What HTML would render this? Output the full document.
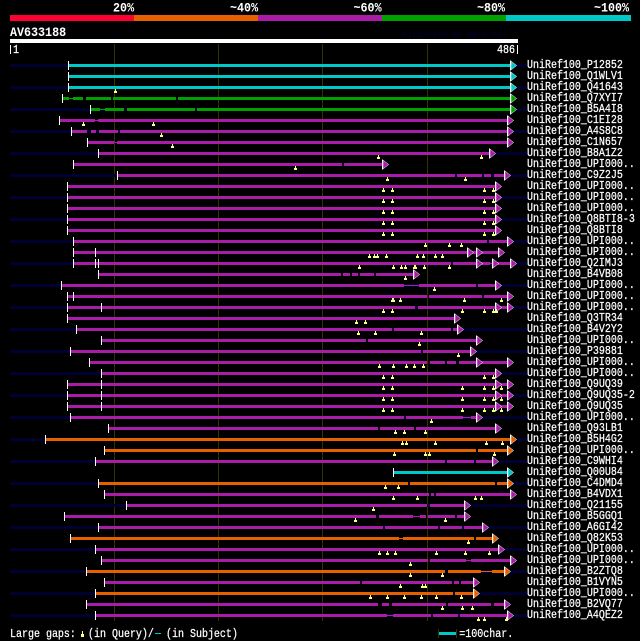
<!DOCTYPE html>
<html><head><meta charset="utf-8"><title>AV633188</title>
<style>
html,body{margin:0;background:#000}
svg{display:block}
.p{color:#a81ca8}.o{color:#e66000}.g{color:#00a000}.c{color:#00c8c8}
.b{fill:none;stroke:currentColor;stroke-width:3}
.n{fill:none;stroke:currentColor;stroke-width:1}
text{font-family:"Liberation Mono",monospace;fill:#fff}
.l text{font-size:12px;stroke:#fff;stroke-width:.25}
.h text{font-size:13px;font-weight:bold}
</style></head><body>
<svg width="640" height="641" viewBox="0 0 640 641" xmlns="http://www.w3.org/2000/svg">
<defs>
<g id="t"><rect x="0" y="-3" width="1" height="9" fill="#fff"/></g>
<g id="a"><path d="M1 -3L6.6 1.5L1 6Z" fill="currentColor" stroke="#fff" stroke-width=".5"/><rect x="0" y="-3.5" width="1" height="10" fill="#fff"/></g>
<path id="m" d="M0 3h1v2h1v2h-3v-2h1z" fill="#ffff80"/>
</defs>
<rect x="10" y="15" width="124" height="6" fill="#ff0033"/>
<rect x="134" y="15" width="124" height="6" fill="#e66000"/>
<rect x="258" y="15" width="124" height="6" fill="#a81ca8"/>
<rect x="382" y="15" width="124" height="6" fill="#00a000"/>
<rect x="506" y="15" width="125" height="6" fill="#00c8c8"/>
<rect x="10" y="39" width="508" height="4" fill="#fff"/>
<rect x="10" y="45" width="1" height="9" fill="#fff"/>
<rect x="517" y="45" width="1" height="9" fill="#fff"/>
<path d="M114.5 44V621M218.5 44V621M322.5 44V621M427.5 44V621" stroke="#333300" stroke-width="1" fill="none"/>
<path d="M10 65.5H527M10 87.5H527M10 109.5H527M10 131.5H527M10 153.5H527M10 175.5H527M10 197.5H527M10 219.5H527M10 241.5H527M10 263.5H527M10 285.5H527M10 307.5H527M10 329.5H527M10 351.5H527M10 373.5H527M10 395.5H527M10 417.5H527M10 439.5H527M10 461.5H527M10 483.5H527M10 505.5H527M10 527.5H527M10 549.5H527M10 571.5H527M10 593.5H527M10 615.5H527" stroke="#000033" stroke-width="3" fill="none"/>

<g class="c" transform="translate(0,64)"><path class="b" d="M68 1.5H510"/><use href="#t" x="68"/><use href="#a" x="510"/></g>
<g class="c" transform="translate(0,75)"><path class="b" d="M68 1.5H510"/><use href="#t" x="68"/><use href="#a" x="510"/></g>
<g class="c" transform="translate(0,86)"><path class="b" d="M68 1.5H510"/><use href="#t" x="68"/><use href="#a" x="510"/><use href="#m" x="115"/></g>
<g class="g" transform="translate(0,97)"><path class="b" d="M62 1.5H69M73 1.5H83M86 1.5H111M113 1.5H176M178 1.5H510"/><path class="n" d="M69 1.5H73"/><use href="#t" x="62"/><use href="#a" x="510"/></g>
<g class="g" transform="translate(0,108)"><path class="b" d="M90 1.5H100M105 1.5H124M127 1.5H195M197 1.5H510"/><path class="n" d="M100 1.5H105"/><use href="#t" x="90"/><use href="#a" x="510"/></g>
<g class="p" transform="translate(0,119)"><path class="b" d="M59 1.5H95M98 1.5H507"/><path class="n" d="M95 1.5H98"/><use href="#t" x="59"/><use href="#a" x="507"/><use href="#m" x="83"/><use href="#m" x="153"/></g>
<g class="p" transform="translate(0,130)"><path class="b" d="M71 1.5H87M91 1.5H96M99 1.5H118M120 1.5H507"/><use href="#t" x="71"/><use href="#a" x="507"/><use href="#m" x="161"/></g>
<g class="p" transform="translate(0,141)"><path class="b" d="M87 1.5H114M117 1.5H507"/><path class="n" d="M114 1.5H117"/><use href="#t" x="87"/><use href="#a" x="507"/><use href="#m" x="172"/></g>
<g class="p" transform="translate(0,152)"><path class="b" d="M98 1.5H489"/><use href="#t" x="98"/><use href="#a" x="489"/><use href="#m" x="378"/><use href="#m" x="481"/></g>
<g class="p" transform="translate(0,163)"><path class="b" d="M73 1.5H342M344 1.5H382"/><use href="#t" x="73"/><use href="#a" x="382"/><use href="#m" x="295"/></g>
<g class="p" transform="translate(0,174)"><path class="b" d="M117 1.5H455M457 1.5H482M484 1.5H491M494 1.5H504"/><use href="#t" x="117"/><use href="#a" x="504"/><use href="#m" x="387"/><use href="#m" x="465"/></g>
<g class="p" transform="translate(0,185)"><path class="b" d="M67 1.5H495"/><use href="#t" x="67"/><use href="#a" x="495"/><use href="#m" x="383"/><use href="#m" x="392"/><use href="#m" x="484"/><use href="#m" x="493"/></g>
<g class="p" transform="translate(0,196)"><path class="b" d="M67 1.5H495"/><use href="#t" x="67"/><use href="#a" x="495"/><use href="#m" x="383"/><use href="#m" x="392"/><use href="#m" x="484"/><use href="#m" x="493"/></g>
<g class="p" transform="translate(0,207)"><path class="b" d="M67 1.5H495"/><use href="#t" x="67"/><use href="#a" x="495"/><use href="#m" x="383"/><use href="#m" x="392"/><use href="#m" x="484"/><use href="#m" x="493"/></g>
<g class="p" transform="translate(0,218)"><path class="b" d="M67 1.5H495"/><use href="#t" x="67"/><use href="#a" x="495"/><use href="#m" x="383"/><use href="#m" x="392"/><use href="#m" x="484"/><use href="#m" x="493"/></g>
<g class="p" transform="translate(0,229)"><path class="b" d="M67 1.5H495"/><use href="#t" x="67"/><use href="#a" x="495"/><use href="#m" x="383"/><use href="#m" x="392"/><use href="#m" x="484"/><use href="#m" x="493"/></g>
<g class="p" transform="translate(0,240)"><path class="b" d="M73 1.5H487M489 1.5H507"/><use href="#t" x="73"/><use href="#a" x="507"/><use href="#m" x="425"/><use href="#m" x="449"/><use href="#m" x="461"/></g>
<g class="p" transform="translate(0,251)"><path class="b" d="M73 1.5H478M481 1.5H498"/><path class="n" d="M478 1.5H481"/><use href="#t" x="73"/><use href="#t" x="95"/><use href="#a" x="467"/><use href="#a" x="476"/><use href="#a" x="498"/><use href="#m" x="369"/><use href="#m" x="374"/><use href="#m" x="377"/><use href="#m" x="386"/><use href="#m" x="417"/><use href="#m" x="423"/><use href="#m" x="435"/><use href="#m" x="442"/></g>
<g class="p" transform="translate(0,262)"><path class="b" d="M73 1.5H451M453 1.5H490M497 1.5H510"/><path class="n" d="M490 1.5H497"/><use href="#t" x="73"/><use href="#t" x="95"/><use href="#t" x="98"/><use href="#a" x="476"/><use href="#a" x="492"/><use href="#a" x="510"/><use href="#m" x="359"/><use href="#m" x="393"/><use href="#m" x="401"/><use href="#m" x="405"/><use href="#m" x="414"/><use href="#m" x="415"/><use href="#m" x="424"/><use href="#m" x="449"/></g>
<g class="p" transform="translate(0,273)"><path class="b" d="M98 1.5H341M343 1.5H350M352 1.5H358M360 1.5H374M376 1.5H413"/><use href="#t" x="98"/><use href="#a" x="413"/><use href="#m" x="405"/></g>
<g class="p" transform="translate(0,284)"><path class="b" d="M61 1.5H404M419 1.5H476M478 1.5H495"/><path class="n" d="M404 1.5H419"/><use href="#t" x="61"/><use href="#a" x="495"/><use href="#m" x="434"/></g>
<g class="p" transform="translate(0,295)"><path class="b" d="M67 1.5H427M429 1.5H482M484 1.5H507"/><use href="#t" x="67"/><use href="#t" x="73"/><use href="#a" x="507"/><use href="#m" x="392"/><use href="#m" x="393"/><use href="#m" x="400"/><use href="#m" x="464"/><use href="#m" x="501"/></g>
<g class="p" transform="translate(0,306)"><path class="b" d="M67 1.5H415M418 1.5H507"/><use href="#t" x="67"/><use href="#t" x="101"/><use href="#a" x="495"/><use href="#a" x="507"/><use href="#m" x="383"/><use href="#m" x="392"/><use href="#m" x="462"/><use href="#m" x="484"/><use href="#m" x="493"/><use href="#m" x="496"/></g>
<g class="p" transform="translate(0,317)"><path class="b" d="M67 1.5H454"/><use href="#t" x="67"/><use href="#a" x="454"/><use href="#m" x="356"/><use href="#m" x="365"/></g>
<g class="p" transform="translate(0,328)"><path class="b" d="M76 1.5H392M394 1.5H451M453 1.5H457"/><use href="#t" x="76"/><use href="#a" x="457"/><use href="#m" x="358"/><use href="#m" x="375"/><use href="#m" x="421"/></g>
<g class="p" transform="translate(0,339)"><path class="b" d="M101 1.5H366M368 1.5H476"/><use href="#t" x="101"/><use href="#a" x="476"/><use href="#m" x="419"/></g>
<g class="p" transform="translate(0,350)"><path class="b" d="M70 1.5H421M423 1.5H470"/><use href="#t" x="70"/><use href="#a" x="470"/><use href="#m" x="458"/></g>
<g class="p" transform="translate(0,361)"><path class="b" d="M89 1.5H427M430 1.5H445M447 1.5H456M459 1.5H507"/><use href="#t" x="89"/><use href="#a" x="476"/><use href="#a" x="507"/><use href="#m" x="379"/><use href="#m" x="393"/><use href="#m" x="406"/><use href="#m" x="414"/><use href="#m" x="423"/></g>
<g class="p" transform="translate(0,372)"><path class="b" d="M101 1.5H495"/><use href="#t" x="101"/><use href="#a" x="495"/><use href="#m" x="383"/><use href="#m" x="392"/><use href="#m" x="484"/><use href="#m" x="493"/></g>
<g class="p" transform="translate(0,383)"><path class="b" d="M67 1.5H507"/><use href="#t" x="67"/><use href="#t" x="101"/><use href="#a" x="495"/><use href="#a" x="507"/><use href="#m" x="383"/><use href="#m" x="392"/><use href="#m" x="462"/><use href="#m" x="484"/><use href="#m" x="493"/><use href="#m" x="501"/></g>
<g class="p" transform="translate(0,394)"><path class="b" d="M67 1.5H507"/><use href="#t" x="67"/><use href="#t" x="101"/><use href="#a" x="495"/><use href="#a" x="507"/><use href="#m" x="383"/><use href="#m" x="392"/><use href="#m" x="462"/><use href="#m" x="484"/><use href="#m" x="493"/><use href="#m" x="501"/></g>
<g class="p" transform="translate(0,405)"><path class="b" d="M67 1.5H507"/><use href="#t" x="67"/><use href="#t" x="101"/><use href="#a" x="495"/><use href="#a" x="507"/><use href="#m" x="383"/><use href="#m" x="392"/><use href="#m" x="462"/><use href="#m" x="484"/><use href="#m" x="493"/><use href="#m" x="501"/></g>
<g class="p" transform="translate(0,416)"><path class="b" d="M70 1.5H404M406 1.5H463M471 1.5H476"/><path class="n" d="M463 1.5H471"/><use href="#t" x="70"/><use href="#a" x="476"/><use href="#m" x="431"/></g>
<g class="p" transform="translate(0,427)"><path class="b" d="M108 1.5H378M380 1.5H414M416 1.5H495"/><use href="#t" x="108"/><use href="#a" x="495"/><use href="#m" x="395"/><use href="#m" x="404"/><use href="#m" x="425"/></g>
<g class="o" transform="translate(0,438)"><path class="b" d="M45 1.5H510"/><use href="#t" x="45"/><use href="#a" x="510"/><use href="#m" x="402"/><use href="#m" x="406"/><use href="#m" x="435"/><use href="#m" x="486"/><use href="#m" x="502"/></g>
<g class="o" transform="translate(0,449)"><path class="b" d="M104 1.5H476M478 1.5H507"/><use href="#t" x="104"/><use href="#a" x="507"/><use href="#m" x="394"/><use href="#m" x="425"/><use href="#m" x="429"/><use href="#m" x="494"/></g>
<g class="p" transform="translate(0,460)"><path class="b" d="M95 1.5H445M447 1.5H474M476 1.5H492"/><use href="#t" x="95"/><use href="#a" x="492"/></g>
<g class="c" transform="translate(0,471)"><path class="b" d="M393 1.5H507"/><use href="#t" x="393"/><use href="#a" x="507"/></g>
<g class="o" transform="translate(0,482)"><path class="b" d="M98 1.5H408M410 1.5H495M497 1.5H507"/><use href="#t" x="98"/><use href="#a" x="507"/><use href="#m" x="385"/><use href="#m" x="398"/></g>
<g class="p" transform="translate(0,493)"><path class="b" d="M104 1.5H429M431 1.5H434M436 1.5H510"/><use href="#t" x="104"/><use href="#a" x="510"/><use href="#m" x="393"/><use href="#m" x="417"/><use href="#m" x="475"/><use href="#m" x="481"/></g>
<g class="p" transform="translate(0,504)"><path class="b" d="M126 1.5H427M430 1.5H464"/><use href="#t" x="126"/><use href="#a" x="464"/><use href="#m" x="373"/></g>
<g class="p" transform="translate(0,515)"><path class="b" d="M64 1.5H376M379 1.5H413M420 1.5H426M428 1.5H455M457 1.5H464"/><path class="n" d="M413 1.5H420"/><use href="#t" x="64"/><use href="#a" x="464"/><use href="#m" x="355"/><use href="#m" x="445"/></g>
<g class="p" transform="translate(0,526)"><path class="b" d="M98 1.5H383M385 1.5H438M440 1.5H462M464 1.5H482"/><use href="#t" x="98"/><use href="#a" x="482"/></g>
<g class="o" transform="translate(0,537)"><path class="b" d="M70 1.5H399M403 1.5H474M476 1.5H492"/><path class="n" d="M399 1.5H403"/><use href="#t" x="70"/><use href="#a" x="492"/><use href="#m" x="468"/></g>
<g class="p" transform="translate(0,548)"><path class="b" d="M95 1.5H498"/><use href="#t" x="95"/><use href="#a" x="498"/><use href="#m" x="379"/><use href="#m" x="387"/><use href="#m" x="395"/><use href="#m" x="436"/><use href="#m" x="465"/><use href="#m" x="489"/></g>
<g class="p" transform="translate(0,559)"><path class="b" d="M101 1.5H428M430 1.5H466M471 1.5H510"/><path class="n" d="M466 1.5H471"/><use href="#t" x="101"/><use href="#a" x="510"/><use href="#m" x="410"/></g>
<g class="o" transform="translate(0,570)"><path class="b" d="M86 1.5H445M448 1.5H481M492 1.5H504"/><path class="n" d="M481 1.5H492"/><use href="#t" x="86"/><use href="#a" x="504"/><use href="#m" x="410"/><use href="#m" x="442"/></g>
<g class="p" transform="translate(0,581)"><path class="b" d="M104 1.5H360M362 1.5H452M454 1.5H459M461 1.5H473"/><use href="#t" x="104"/><use href="#a" x="473"/><use href="#m" x="400"/><use href="#m" x="422"/><use href="#m" x="425"/></g>
<g class="o" transform="translate(0,592)"><path class="b" d="M95 1.5H453M455 1.5H473"/><use href="#t" x="95"/><use href="#a" x="473"/><use href="#m" x="370"/><use href="#m" x="387"/><use href="#m" x="404"/><use href="#m" x="421"/><use href="#m" x="436"/><use href="#m" x="461"/></g>
<g class="p" transform="translate(0,603)"><path class="b" d="M86 1.5H378M382 1.5H389M392 1.5H446M448 1.5H491M494 1.5H504"/><use href="#t" x="86"/><use href="#a" x="504"/><use href="#m" x="442"/><use href="#m" x="462"/><use href="#m" x="472"/></g>
<g class="p" transform="translate(0,614)"><path class="b" d="M95 1.5H387M393 1.5H431M433 1.5H458M460 1.5H507"/><path class="n" d="M387 1.5H393"/><use href="#t" x="95"/><use href="#a" x="507"/><use href="#m" x="478"/><use href="#m" x="484"/><use href="#m" x="506"/></g>

<g class="h" transform="scale(.9,1)">
<text x="125.6" y="11.5">20%</text>
<text x="255.6" y="11.5">~40%</text>
<text x="392.8" y="11.5">~60%</text>
<text x="530" y="11.5">~80%</text>
<text x="660" y="11.5">~100%</text>
<text x="11.1" y="36">AV633188</text>
</g>
<text x="402" y="37" font-size="8.33" style="fill:#000033">AlignView.pm Beta rel.7</text>
<g class="l" transform="scale(.8333,1)">
<text x="15.6" y="53">1</text>
<text x="596.4" y="53">486</text>
<text x="632.4" y="68">UniRef100_P12852</text>
<text x="632.4" y="79">UniRef100_Q1WLV1</text>
<text x="632.4" y="90">UniRef100_Q41643</text>
<text x="632.4" y="101">UniRef100_Q7XYI7</text>
<text x="632.4" y="112">UniRef100_B5A4I8</text>
<text x="632.4" y="123">UniRef100_C1EI28</text>
<text x="632.4" y="134">UniRef100_A4S8C8</text>
<text x="632.4" y="145">UniRef100_C1N657</text>
<text x="632.4" y="156">UniRef100_B8A1Z2</text>
<text x="632.4" y="167">UniRef100_UPI000..</text>
<text x="632.4" y="178">UniRef100_C9Z2J5</text>
<text x="632.4" y="189">UniRef100_UPI000..</text>
<text x="632.4" y="200">UniRef100_UPI000..</text>
<text x="632.4" y="211">UniRef100_UPI000..</text>
<text x="632.4" y="222">UniRef100_Q8BTI8-3</text>
<text x="632.4" y="233">UniRef100_Q8BTI8</text>
<text x="632.4" y="244">UniRef100_UPI000..</text>
<text x="632.4" y="255">UniRef100_UPI000..</text>
<text x="632.4" y="266">UniRef100_Q2IMJ3</text>
<text x="632.4" y="277">UniRef100_B4VB08</text>
<text x="632.4" y="288">UniRef100_UPI000..</text>
<text x="632.4" y="299">UniRef100_UPI000..</text>
<text x="632.4" y="310">UniRef100_UPI000..</text>
<text x="632.4" y="321">UniRef100_Q3TR34</text>
<text x="632.4" y="332">UniRef100_B4V2Y2</text>
<text x="632.4" y="343">UniRef100_UPI000..</text>
<text x="632.4" y="354">UniRef100_P39881</text>
<text x="632.4" y="365">UniRef100_UPI000..</text>
<text x="632.4" y="376">UniRef100_UPI000..</text>
<text x="632.4" y="387">UniRef100_Q9UQ39</text>
<text x="632.4" y="398">UniRef100_Q9UQ35-2</text>
<text x="632.4" y="409">UniRef100_Q9UQ35</text>
<text x="632.4" y="420">UniRef100_UPI000..</text>
<text x="632.4" y="431">UniRef100_Q93LB1</text>
<text x="632.4" y="442">UniRef100_B5H4G2</text>
<text x="632.4" y="453">UniRef100_UPI000..</text>
<text x="632.4" y="464">UniRef100_C9WHI4</text>
<text x="632.4" y="475">UniRef100_Q00U84</text>
<text x="632.4" y="486">UniRef100_C4DMD4</text>
<text x="632.4" y="497">UniRef100_B4VDX1</text>
<text x="632.4" y="508">UniRef100_Q21155</text>
<text x="632.4" y="519">UniRef100_B5GGQ1</text>
<text x="632.4" y="530">UniRef100_A6GI42</text>
<text x="632.4" y="541">UniRef100_Q82K53</text>
<text x="632.4" y="552">UniRef100_UPI000..</text>
<text x="632.4" y="563">UniRef100_UPI000..</text>
<text x="632.4" y="574">UniRef100_B2ZTQ8</text>
<text x="632.4" y="585">UniRef100_B1VYN5</text>
<text x="632.4" y="596">UniRef100_UPI000..</text>
<text x="632.4" y="607">UniRef100_B2VQ77</text>
<text x="632.4" y="618">UniRef100_A4QEZ2</text>
<text x="12" y="637">Large gaps:</text>
<text x="105.6" y="637">(in Query)/</text>
<text x="199.2" y="637">(in Subject)</text>
<text x="551.2" y="637">=100char.</text>
</g>
<path d="M82 631h1v3h1v3h-3v-3h1z" fill="#ffff80"/>
<rect x="155" y="633" width="6" height="1" fill="#00c8c8"/>
<rect x="439" y="632" width="17" height="3" fill="#00c8c8"/>
<rect x="438" y="629" width="1" height="9" fill="#333300"/>
<rect x="456" y="629" width="1" height="9" fill="#333300"/>
</svg>
</body></html>
